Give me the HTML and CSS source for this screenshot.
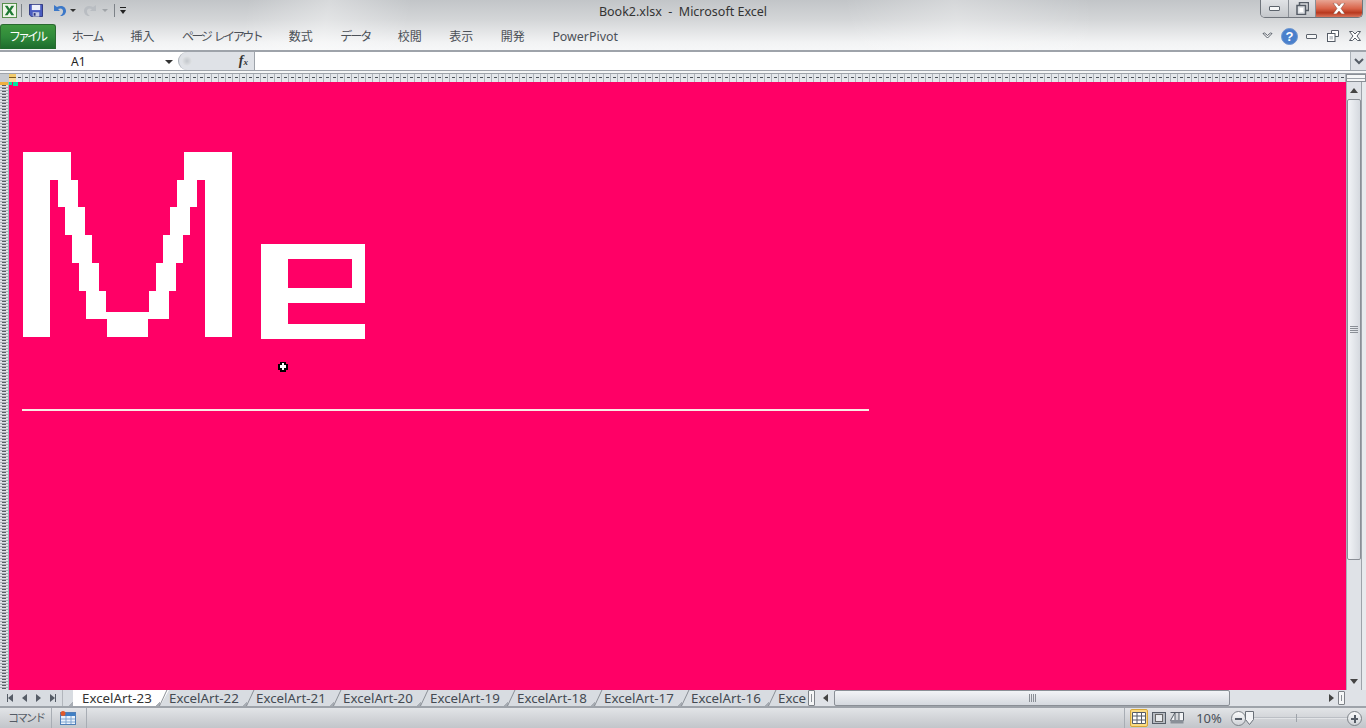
FILE: index.html
```html
<!DOCTYPE html>
<html lang="ja">
<head>
  <meta charset="UTF-8" />
  <title>Book2.xlsx - Microsoft Excel</title>
  <link rel="stylesheet" href="styles.css">
</head>
<body>

  <div class="ribbon">
    <div class="titlebar">
      <div class="qat">
        <svg class="qat-excel" width="15" height="15" viewBox="0 0 16 16">
          <rect x="0.5" y="0.5" width="15" height="15" fill="#eef5e8" stroke="#4f8a45"/>
          <path d="M3 3h3l2 3.2L10 3h3L9.6 8 13 13h-3L8 9.8 6 13H3l3.4-5z" fill="#1f7a34"/>
        </svg>
        <span class="qat-sep"></span>
        <svg class="qat-save" width="14" height="13" viewBox="0 0 15 15" preserveAspectRatio="none">
          <path d="M0.5 0.5h14v14h-12l-2-2z" fill="#4a5cc0" stroke="#28317a"/>
          <rect x="3" y="1" width="9" height="6" fill="#eef0fa"/>
          <rect x="4" y="9.5" width="7" height="5" fill="#c6cbe4"/>
          <rect x="5" y="10.5" width="2" height="3" fill="#28317a"/>
        </svg>
        <svg class="qat-undo" width="15" height="14" viewBox="0 0 15 14">
          <path d="M2 1v6h6L6 5c3-1.500 5.500 0 5 3-.3 1.800-1.500 3-3 4 4 .5 6-2.500 6-5 0-4.500-5-6.500-9-4z" fill="#3c78c8"/>
        </svg>
        <span class="caret caret-dark"></span>
        <svg class="qat-redo" width="15" height="14" viewBox="0 0 15 14">
          <path d="M13 1v6H7l2-2C6 3.500 3.500 5 4 8c.3 1.800 1.500 3 3 4-4 .5-6-2.500-6-5 0-4.500 5-6.500 9-4z" fill="#b9bdc2"/>
        </svg>
        <span class="caret caret-grey"></span>
        <span class="qat-sep qat-sep-end"></span>
        <span class="qat-more"></span>
      </div>
      <div class="doc-title">Book2.xlsx&nbsp; -&nbsp; Microsoft Excel</div>
      <div class="winbtns">
        <div class="winbtn winbtn-min"><span class="min-glyph"></span></div>
        <div class="winbtn winbtn-max">
          <svg width="13" height="13" viewBox="0 0 13 13">
            <path d="M3.500 3.500V.5h9v8h-3" fill="none" stroke="#555c66" stroke-width="1.500"/>
            <rect x="1" y="3.500" width="8.500" height="9" fill="#dfe2e6" stroke="#555c66" stroke-width="1.500"/>
            <rect x="3.500" y="6" width="3.500" height="4" fill="#fff"/>
          </svg>
        </div>
        <div class="winbtn winbtn-close">
          <svg width="14" height="11" viewBox="0 0 14 11">
            <path d="M1 0h3.500L7 3l2.500-3H13L9 5.500l4 5.500H9.500L7 8l-2.500 3H1l4-5.500z" fill="#fff" stroke="#7a3a2a" stroke-width=".5"/>
          </svg>
        </div>
      </div>
    </div>
    <div class="tabs">
      <div class="file-tab">ファイル</div>
      <div class="tab kana-home">ホーム</div>
      <div class="tab">挿入</div>
      <div class="tab kana-layout">ページ レイアウト</div>
      <div class="tab">数式</div>
      <div class="tab kana-data">データ</div>
      <div class="tab">校閲</div>
      <div class="tab">表示</div>
      <div class="tab">開発</div>
      <div class="tab tab-latin">PowerPivot</div>
      <div class="tab-tools">
        <svg width="11" height="9" viewBox="0 0 11 9">
          <path d="M1 1.500 5.500 6 10 1.500 8.500 1 5.500 3.500 2.500 1z" fill="#fff" stroke="#555c66"/>
        </svg>
        <svg class="help" width="17" height="17" viewBox="0 0 17 17">
          <circle cx="8.500" cy="8.500" r="8" fill="#4a80cc" stroke="#6f97d0"/>
          <text x="8.500" y="13" text-anchor="middle" class="help-mark">?</text>
        </svg>
        <span class="min-glyph"></span>
        <svg width="12" height="12" viewBox="0 0 12 12">
          <path d="M4.500 3V.5h7v6H8" fill="#fff" stroke="#555c66"/>
          <rect x="0.500" y="3.500" width="7.500" height="8" fill="#fff" stroke="#555c66"/>
          <rect x="2.500" y="6" width="3.500" height="3.500" fill="#c6cad0"/>
        </svg>
        <svg width="12" height="10" viewBox="0 0 12 10">
          <path d="M.5.500h3L6 3 8.500.500h3L8 5l3.500 4.500h-3L6 7 3.500 9.500h-3L4 5z" fill="#fff" stroke="#555c66"/>
        </svg>
      </div>
    </div>
  </div>

  <div class="formula">
    <div class="namebox">
      <span class="namebox-val">A1</span>
      <span class="caret caret-dark"></span>
    </div>
    <div class="fx-area">
      <span class="fx-dot"></span>
      <span class="fx">f<sub>x</sub></span>
    </div>
    <div class="formula-input"></div>
    <div class="formula-expand">
      <svg width="10" height="7" viewBox="0 0 10 7"><path d="M1 1l4 4 4-4" fill="none" stroke="#555c66" stroke-width="2"/></svg>
    </div>
  </div>
  <div class="formula-gap"></div>

  <div class="colhead">
    <span class="corner"></span>
    <span class="col-selected"></span>
    <span class="col-rest"></span>
    <span class="split-h"></span>
  </div>

  <div class="workarea">
    <div class="rowhead"><span class="row-selected"></span></div>
    <div class="sheet">
      <!-- painted cells, page coordinates -->
      <svg class="art" viewBox="9 82 1337 608" width="1337" height="608" role="img" aria-label="Me">
        <g fill="#fff" shape-rendering="crispEdges">
          <rect x="23" y="152" width="27" height="185"/>
          <rect x="23" y="152" width="48" height="28"/>
          <rect x="58" y="180" width="20" height="27"/>
          <rect x="65" y="207" width="20" height="28"/>
          <rect x="72" y="235" width="20" height="28"/>
          <rect x="79" y="263" width="20" height="28"/>
          <rect x="86" y="291" width="20" height="28"/>
          <rect x="86" y="312" width="83" height="7"/>
          <rect x="107" y="319" width="41" height="18"/>
          <rect x="149" y="291" width="20" height="28"/>
          <rect x="156" y="263" width="20" height="28"/>
          <rect x="163" y="235" width="20" height="28"/>
          <rect x="170" y="207" width="20" height="28"/>
          <rect x="177" y="180" width="20" height="27"/>
          <rect x="184" y="152" width="48" height="28"/>
          <rect x="205" y="152" width="27" height="185"/>

          <rect x="261" y="244" width="27" height="95"/>
          <rect x="261" y="244" width="104" height="15"/>
          <rect x="352" y="244" width="13" height="59"/>
          <rect x="288" y="288" width="77" height="15"/>
          <rect x="261" y="324" width="104" height="15"/>

          <rect x="22" y="409" width="847" height="2" fill="#fbe9e4"/>
        </g>
        <g shape-rendering="crispEdges">
          <rect x="13" y="82" width="5" height="4" fill="#00e8a0"/>
          <rect x="9" y="82" width="3" height="3" fill="#00e8a0"/>
          <path d="M280 362h6v2h2v6h-2v2h-6v-2h-2v-6h2z" fill="#000"/>
          <path d="M282 363h2v2h2v3h-2v2h-2v-2h-2v-3h2z" fill="#fff"/>
        </g>
      </svg>
    </div>
    <div class="vscroll">
      <div class="scroll-btn"><span class="arrow-up"></span></div>
      <div class="vthumb"><span class="grip"></span></div>
      <div class="vtrack"></div>
      <div class="scroll-btn"><span class="arrow-down"></span></div>
    </div>
  </div>

  <div class="sheetbar">
    <div class="sheet-nav">
      <span class="nav nav-first"></span>
      <span class="nav nav-prev"></span>
      <span class="nav nav-next"></span>
      <span class="nav nav-last"></span>
    </div>
    <div class="sheet-tabs">
      <div class="sheet-tab active">ExcelArt-23</div>
      <div class="sheet-tab">ExcelArt-22</div>
      <div class="sheet-tab">ExcelArt-21</div>
      <div class="sheet-tab">ExcelArt-20</div>
      <div class="sheet-tab">ExcelArt-19</div>
      <div class="sheet-tab">ExcelArt-18</div>
      <div class="sheet-tab">ExcelArt-17</div>
      <div class="sheet-tab">ExcelArt-16</div>
      <div class="sheet-tab">Exce</div>
    </div>
    <div class="split-v"></div>
    <div class="hscroll">
      <span class="arrow-left"></span>
      <div class="hthumb"><span class="grip-h"></span></div>
      <div class="htrack"></div>
      <span class="arrow-right"></span>
      <span class="split-v small"></span>
    </div>
  </div>

  <div class="statusbar">
    <div class="status-text">コマンド</div>
    <div class="status-macro">
      <svg width="16" height="14" viewBox="0 0 16 14">
        <rect x="0.500" y="1.500" width="15" height="12" fill="#eaf2fb" stroke="#4f7fb8"/>
        <rect x="1" y="2" width="14" height="3" fill="#3f7fc4"/>
        <path d="M6 5v8M11 5v8M1 8h14M1 11h14" stroke="#7fa6d2"/>
        <circle cx="3" cy="2.500" r="2.500" fill="#e05a2a"/>
      </svg>
    </div>
    <div class="status-right">
      <div class="view-btn on">
        <svg width="14" height="12" viewBox="0 0 14 12">
          <path d="M.5.500h13v11H.5zM.5 4h13M.5 8h13M5 .5v11M9.500.5v11" fill="#fff" stroke="#555c66"/>
        </svg>
      </div>
      <div class="view-btn">
        <svg width="14" height="12" viewBox="0 0 14 12">
          <rect x="0.500" y="0.500" width="13" height="11" fill="#b8bcc2" stroke="#555c66"/>
          <rect x="3.500" y="2.500" width="7" height="7" fill="#e8eaed" stroke="#666"/>
        </svg>
      </div>
      <div class="view-btn">
        <svg width="14" height="12" viewBox="0 0 14 12">
          <path d="M.5.500h13v8H9V.5M5 .5v8H.5z" fill="#f2f3f5" stroke="#555c66"/>
          <rect x="0.500" y="8" width="13" height="3.500" fill="#8a9098"/>
        </svg>
      </div>
      <div class="zoom-pct">10%</div>
      <div class="zoom-btn"><span class="zoom-minus"></span></div>
      <div class="zoom-slider">
        <span class="zoom-mid"></span>
        <svg class="zoom-knob" width="9" height="14" viewBox="0 0 9 14">
          <path d="M.5.500h8v8l-4 5-4-5z" fill="#f2f3f5" stroke="#6a7078"/>
        </svg>
      </div>
      <div class="zoom-btn"><span class="zoom-minus"></span><span class="zoom-plus"></span></div>
    </div>
  </div>

</body>
</html>
```

FILE: styles.css
```css
* {
  box-sizing: border-box;
}
body {
  margin: 0;
  height: 100vh;
  overflow: hidden;
  display: flex;
  flex-direction: column;
  background-color: #d6d9de;
  font-family: "Noto Sans", "Noto Sans CJK JP", sans-serif;
  font-size: 12px;
  color: #444a52;
}

/* Title bar and tabs */
.ribbon {
  height: 52px;
  flex: none;
  border-bottom: 2px solid #9ea3aa;
  background:
    linear-gradient(100deg, rgba(255,255,255,0) 18%, rgba(255,255,255,.35) 24%, rgba(255,255,255,0) 30%),
    linear-gradient(80deg, rgba(255,255,255,0) 62%, rgba(255,255,255,.3) 70%, rgba(255,255,255,0) 80%),
    linear-gradient(#c2c5c8, #d4d6d8 40%, #f2f3f4 85%, #f6f7f8);
}
.titlebar {
  height: 24px;
  display: flex;
  align-items: flex-start;
  position: relative;
}
.qat {
  display: flex;
  align-items: center;
  height: 21px;
  padding-left: 2px;
}
.qat-sep {
  width: 1px;
  height: 13px;
  background-color: #7d8288;
  margin: 0 7px 0 4px;
}
.qat-sep-end {
  margin: 0 5px 0 0;
}
.qat-save {
  margin-right: 9px;
}
.qat-undo {
  margin-right: 3px;
}
.qat-redo {
  margin-right: 4px;
}
.caret {
  display: inline-block;
  width: 0;
  height: 0;
  border-left: 3px solid transparent;
  border-right: 3px solid transparent;
}
.caret-dark {
  border-top: 3px solid #333;
}
.caret-grey {
  border-top: 3px solid #a0a4a8;
}
.qat .caret-dark {
  margin-right: 7px;
}
.qat .caret-grey {
  margin-right: 6px;
}
.qat-more {
  width: 6px;
  height: 7px;
  border-top: 1px solid #222;
  position: relative;
}
.qat-more::after {
  content: "";
  position: absolute;
  left: 0;
  top: 2px;
  border-left: 3px solid transparent;
  border-right: 3px solid transparent;
  border-top: 4px solid #222;
}
.doc-title {
  position: absolute;
  left: 0;
  right: 0;
  top: 3px;
  text-align: center;
  font-size: 12.500px;
  color: #333;
  line-height: 18px;
}
.winbtns {
  position: absolute;
  right: 3px;
  top: 0;
  display: flex;
  height: 18px;
  border: 1px solid #70757c;
  border-top: none;
  border-radius: 0 0 5px 5px;
  overflow: hidden;
}
.winbtn {
  display: flex;
  align-items: center;
  justify-content: center;
  height: 17px;
  background: linear-gradient(#e0e2e5, #c4c7cb);
}
.winbtn-min {
  width: 28px;
  border-right: 1px solid #8a8f96;
}
.winbtn-max {
  width: 27px;
  border-right: 1px solid #8a8f96;
}
.winbtn-close {
  width: 46px;
  background: linear-gradient(#e8a594, #d9644a 50%, #b8391f 75%, #d9745c);
}
.min-glyph {
  display: block;
  width: 11px;
  height: 5px;
  background-color: #f6f7f8;
  border: 1px solid #5c636c;
  border-radius: 1px;
}
.tabs {
  height: 26px;
  display: flex;
  align-items: stretch;
}
.file-tab {
  width: 56px;
  height: 25px;
  margin-right: 2px;
  background: linear-gradient(#3f9a3f, #2f8a3a 50%, #1d6a2c);
  border: 1px solid #2a6a30;
  border-bottom: none;
  border-radius: 3px 3px 0 0;
  color: #fff;
  text-align: center;
  line-height: 24px;
  letter-spacing: -3px;
  padding-right: 2px;
}
.tab {
  padding: 0 13.750px;
  line-height: 25px;
  color: #4c5158;
}
.kana-home {
  letter-spacing: -1.500px;
}
.kana-layout {
  letter-spacing: -2.500px;
  word-spacing: 3px;
}
.kana-data {
  letter-spacing: -2px;
}
.tab-latin {
  font-size: 12.400px;
}
.tab-tools {
  margin-left: auto;
  display: flex;
  align-items: center;
  gap: 10px;
  padding: 0 5px 2px 0;
}
.help {
  margin: 0 -2px;
}
.help-mark {
  fill: #fff;
  font-size: 13px;
  font-weight: 700;
  font-family: "Liberation Sans", sans-serif;
}

/* Formula bar */
.formula {
  height: 18px;
  flex: none;
  display: flex;
  background-color: #fff;
}
.namebox {
  width: 178px;
  position: relative;
  display: flex;
  align-items: center;
}
.namebox-val {
  margin-left: 71px;
  color: #222;
}
.namebox .caret {
  position: absolute;
  left: 165px;
  top: 8px;
  border-left-width: 4px;
  border-right-width: 4px;
  border-top-width: 4px;
}
.fx-area {
  width: 77px;
  display: flex;
  align-items: center;
  justify-content: space-between;
  padding: 0 6px 0 3px;
  background-color: #dfe2e7;
  border-left: 1px solid #aab0b7;
  border-right: 1px solid #9ea3aa;
  border-radius: 9px 0 0 9px;
}
.fx-dot {
  width: 10px;
  height: 10px;
  border-radius: 50%;
  background: radial-gradient(#c3c7cc, #eceef0);
}
.fx {
  font-family: "Liberation Serif", serif;
  font-weight: 700;
  font-style: italic;
  font-size: 14px;
  color: #333;
  line-height: 14px;
}
.fx sub {
  font-size: 9px;
  vertical-align: baseline;
}
.formula-input {
  flex: 1;
}
.formula-expand {
  width: 16px;
  display: flex;
  align-items: center;
  justify-content: center;
  background-color: #dfe2e7;
  border-left: 1px solid #aab0b7;
}
.formula-gap {
  height: 4px;
  flex: none;
  background: linear-gradient(#9ea3aa 1px, #f5f6f7 1px, #f5f6f7 3px, #9ea3aa 3px);
}

/* Column and row headers */
.colhead {
  height: 8px;
  flex: none;
  display: flex;
  background-color: #d8dce1;
}
.corner {
  width: 9px;
  background-color: #c6cad0;
}
.col-selected {
  width: 7px;
  background: #f5cc70 linear-gradient(#f2cb6c 3px, #7a5a20 3px, #7a5a20 4px, #f8dc98 4px);
}
.col-rest {
  flex: 1;
  background:
    repeating-linear-gradient(90deg, transparent 0 2px, #4a5058 2px 5px, transparent 5px 7px) 0 3px / 100% 1px no-repeat,
    repeating-linear-gradient(90deg, #e4e7eb 0 6px, #aeb3ba 6px 7px);
}
.split-h {
  width: 20px;
  border: 1px solid #8a8f96;
  background: linear-gradient(#f6f7f8 3px, #9ea3aa 3px, #9ea3aa 4px, #f6f7f8 4px);
}
.workarea {
  flex: 1;
  min-height: 0;
  display: flex;
}
.rowhead {
  width: 9px;
  flex: none;
  background:
    repeating-linear-gradient(#5a5f66 0 1px, transparent 1px 3px) 2px 0 / 4px 100% no-repeat,
    repeating-linear-gradient(#dfe2e6 0 2px, #a8adb4 2px 3px);
  border-right: 1px solid #aab0b7;
}
.row-selected {
  display: block;
  height: 3px;
  background-color: #f0b040;
}
.sheet {
  flex: 1;
  background-color: #ff0066;
  overflow: hidden;
}
.art {
  display: block;
}

/* Scrollbars */
.vscroll {
  width: 20px;
  flex: none;
  display: flex;
  flex-direction: column;
  background: linear-gradient(90deg, #dfe2e7 14px, #9ea3aa 14px 15px, #e8eaed 15px);
  border-left: 1px solid #aab0b7;
  padding-right: 5px;
}
.scroll-btn {
  height: 17px;
  display: flex;
  align-items: center;
  justify-content: center;
}
.arrow-up {
  border-left: 4px solid transparent;
  border-right: 4px solid transparent;
  border-bottom: 5px solid #444;
}
.arrow-down {
  border-left: 4px solid transparent;
  border-right: 4px solid transparent;
  border-top: 5px solid #444;
}
.vthumb {
  height: 461px;
  display: flex;
  align-items: center;
  justify-content: center;
  background: linear-gradient(90deg, #f2f4f7, #d5d9df);
  border: 1px solid #8a8f96;
  border-radius: 2px;
}
.grip {
  width: 8px;
  height: 7px;
  background: repeating-linear-gradient(#8a8f96 0 1px, transparent 1px 2px);
}
.vtrack {
  flex: 1;
}
.sheetbar {
  height: 18px;
  flex: none;
  display: flex;
  align-items: stretch;
  background-color: #d8dce1;
  border-bottom: 2px solid #9ea3aa;
}
.sheet-nav {
  width: 63px;
  flex: none;
  display: flex;
  align-items: center;
  justify-content: space-around;
  padding: 0 3px;
  border-right: 1px solid #b2b6bc;
}
.nav {
  width: 0;
  height: 0;
  position: relative;
  border-top: 4px solid transparent;
  border-bottom: 4px solid transparent;
}
.nav-first,
.nav-prev {
  border-right: 5px solid #555c66;
}
.nav-next,
.nav-last {
  border-left: 5px solid #555c66;
}
.nav-first::before,
.nav-last::before {
  content: "";
  position: absolute;
  top: -4px;
  height: 8px;
  width: 1px;
  background-color: #555c66;
}
.nav-first::before {
  left: -1px;
}
.nav-last::before {
  left: 0;
}
.sheet-tabs {
  width: 745px;
  flex: none;
  display: flex;
  padding-left: 5px;
  overflow: hidden;
  background-color: #d8dce1;
  isolation: isolate;
}
.sheet-tab {
  width: 87px;
  flex: none;
  padding-left: 14px;
  line-height: 16px;
  font-size: 13.300px;
  white-space: nowrap;
  position: relative;
  color: #444a52;
  background: linear-gradient(to bottom right, transparent 50%, #a8adb4 50%) 0 100% / 5px 4px no-repeat;
}
.sheet-tab::before {
  content: "";
  position: absolute;
  left: 4px;
  bottom: 0;
  width: 1px;
  height: 20px;
  background-color: #8a8f96;
  transform: skewX(-25deg);
  transform-origin: bottom;
}
.sheet-tab.active {
  color: #333;
}
.sheet-tab.active::before {
  display: none;
}
.sheet-tab.active::after {
  content: "";
  position: absolute;
  left: 5px;
  top: 0;
  bottom: 0;
  width: 96px;
  background-color: #fff;
  clip-path: polygon(0 0, 100% 0, 87px 100%, 0 100%);
  z-index: -1;
}
.split-v {
  width: 7px;
  flex: none;
  background-color: #f5f6f7;
  border: 1px solid #7d8288;
  border-radius: 1px;
  position: relative;
}
.split-v::after {
  content: "";
  position: absolute;
  left: 2px;
  top: 3px;
  bottom: 3px;
  width: 1px;
  background-color: #8a8f96;
}
.hscroll {
  flex: 1;
  display: flex;
  align-items: center;
  background-color: #dfe2e7;
}
.arrow-left {
  margin: 0 6px 0 8px;
  border-top: 4px solid transparent;
  border-bottom: 4px solid transparent;
  border-right: 5px solid #444;
}
.hthumb {
  width: 396px;
  height: 16px;
  display: flex;
  align-items: center;
  justify-content: center;
  background: linear-gradient(#f2f4f7, #d5d9df);
  border: 1px solid #8a8f96;
  border-radius: 2px;
}
.grip-h {
  width: 7px;
  height: 8px;
  background: repeating-linear-gradient(90deg, #8a8f96 0 1px, transparent 1px 2px);
}
.htrack {
  flex: 1;
}
.arrow-right {
  margin-right: 4px;
  border-top: 4px solid transparent;
  border-bottom: 4px solid transparent;
  border-left: 5px solid #444;
}
.split-v.small {
  height: 14px;
  margin-right: 21px;
}

/* Status bar */
.statusbar {
  height: 20px;
  flex: none;
  display: flex;
  align-items: center;
  background: linear-gradient(#e2e4e7, #c2c5ca);
}
.status-text {
  width: 52px;
  padding-left: 8px;
  font-size: 11px;
  letter-spacing: -2px;
  white-space: nowrap;
  color: #555c66;
  border-right: 1px solid #a8adb4;
  line-height: 20px;
}
.status-macro {
  width: 35px;
  height: 20px;
  display: flex;
  align-items: center;
  padding-left: 8px;
  border-right: 1px solid #a8adb4;
}
.status-right {
  margin-left: auto;
  display: flex;
  align-items: center;
  height: 20px;
  padding: 0 4px 0 5px;
  border-left: 1px solid #a8adb4;
}
.view-btn {
  width: 15px;
  height: 18px;
  margin-right: 3px;
  display: flex;
  align-items: center;
  justify-content: center;
}
.view-btn.on {
  width: 18px;
  background-color: #fbdc82;
  border: 1px solid #d8a838;
  border-radius: 2px;
}
.zoom-pct {
  width: 44px;
  text-align: center;
  color: #4a5058;
  font-size: 13px;
}
.zoom-btn {
  width: 15px;
  height: 15px;
  position: relative;
  border-radius: 50%;
  border: 1px solid #7d8288;
  background: linear-gradient(#fbfbfc, #cfd2d7);
}
.zoom-minus {
  position: absolute;
  left: 3px;
  top: 6px;
  width: 7px;
  height: 2px;
  background-color: #555c66;
}
.zoom-plus {
  position: absolute;
  left: 5.500px;
  top: 3px;
  width: 2px;
  height: 8px;
  background-color: #555c66;
}
.zoom-slider {
  width: 101px;
  height: 14px;
  position: relative;
  background: linear-gradient(transparent 6px, #a8adb4 6px, #f5f6f7 8px, transparent 8px);
}
.zoom-mid {
  position: absolute;
  left: 50px;
  top: 3px;
  width: 1px;
  height: 8px;
  background-color: #9ea3aa;
}
.zoom-knob {
  position: absolute;
  left: -1px;
  top: 0;
}
```
